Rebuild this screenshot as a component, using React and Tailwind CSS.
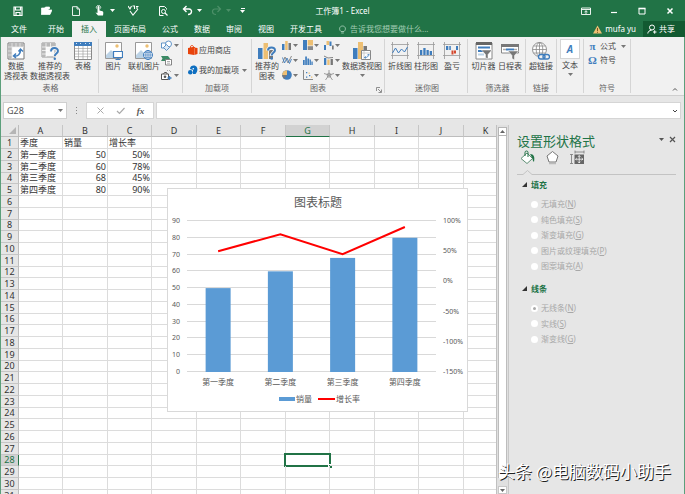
import { useState } from 'react';
import clsx from 'clsx';

const COLUMNS = ['A', 'B', 'C', 'D', 'E', 'F', 'G', 'H', 'I', 'J', 'K'];
const ROWS = Array.from({ length: 31 }, (_, i) => i + 1);
const SELECTED = { col: 'G', row: 28 };

const SALES = [
  { name: '第一季度', amount: 50, rate: 50 },
  { name: '第二季度', amount: 60, rate: 78 },
  { name: '第三季度', amount: 68, rate: 45 },
  { name: '第四季度', amount: 80, rate: 90 },
];

const CELLS = { A1: '季度', B1: '销量', C1: '增长率' };
SALES.forEach((s, i) => {
  CELLS[`A${i + 2}`] = s.name;
  CELLS[`B${i + 2}`] = s.amount;
  CELLS[`C${i + 2}`] = `${s.rate}%`;
});

const BLUE = '#3f7dbd';
const TAN = '#edbf73';
const GRAY = '#777777';

/* ---------- small shared pieces ---------- */

function Caret({ className }) {
  return (
    <svg viewBox="0 0 5 3" className={clsx('w-[5px] h-[3px] shrink-0', className)} fill="currentColor">
      <path d="M0 0h5L2.5 3z" />
    </svg>
  );
}

function Icon({ size = 18, className, children }) {
  return (
    <svg viewBox={`0 0 ${size} ${size}`} width={size} height={size} fill="none" className={clsx('shrink-0', className)}>
      {children}
    </svg>
  );
}

function BigButton({ icon, lines, caret, className }) {
  return (
    <button className={clsx('flex flex-col items-center shrink-0 pt-[3px]', className)}>
      {icon}
      <span className="mt-px flex flex-col items-center whitespace-nowrap leading-[10px]">
        {lines.map((l) => <span key={l}>{l}</span>)}
      </span>
      {caret && <Caret className="mt-[3px] text-[#777]" />}
    </button>
  );
}

function Group({ label, className, launcher, children }) {
  return (
    <section className={clsx('relative flex flex-col shrink-0 border-r border-[#d5d5d5] my-[2px]', className)}>
      <div className="flex flex-1">{children}</div>
      <div className="h-[10px] leading-[10px] text-center text-[#666]">{label}</div>
      {launcher && (
        <button aria-label="图表选项" className="absolute right-[2px] bottom-0">
          <Icon size={6} className="text-[#777]"><path d="M.5 4V.5H4M2 2l3 3M5.500 2.500v3h-3" stroke="currentColor" strokeWidth=".8" /></Icon>
        </button>
      )}
    </section>
  );
}

/* ---------- ribbon icons ---------- */

const PivotIcon = () => (
  <Icon>
    <path d="M1 1h16v16H1z" fill="#fff" stroke={GRAY} />
    <path d="M1.500 1.500h15v3.500h-15zM1.500 1.500H5v15H1.500z" fill="#b8b8b8" />
    <path d="M1 5h16M5 1v16M1 9h4M1 13h4M9 1v4M13 1v4" stroke="#eee" strokeWidth=".7" />
    <path d="M7 14c4 .5 6.500-2 6.500-6M11.500 9.500l2-2.500 2.500 2.500M9 11.500L6.500 14 9 16" stroke={BLUE} strokeWidth="1.500" />
  </Icon>
);

const PivotHelpIcon = () => (
  <Icon>
    <path d="M1 1h13v14H1z" fill="#f8f8f8" stroke="#999" />
    <path d="M1 1h13v4H1zM1 1h4v14H1z" fill="#b8b8b8" />
    <path d="M1 5h13M5 1v14M1 8.500h9M1 12h8M9.500 1v12" stroke="#fff" strokeWidth=".7" />
    <path d="M10 9c0-4 7-4 7 0 0 2.500-3 2.500-3 5.500" stroke="#f1f1f1" strokeWidth="4" />
    <path d="M10 9.500c0-4.500 7-4.500 7-.5 0 2.500-3.200 2.300-3.200 5" stroke={BLUE} strokeWidth="1.900" />
    <circle cx="13.800" cy="16.700" r="1.200" fill={BLUE} />
  </Icon>
);

const TableIcon = () => (
  <Icon>
    <path d="M.5 1h17v16.500H.5z" fill="#fff" stroke="#8a8a8a" />
    <path d="M0 0h18v4H0z" fill={BLUE} />
    <path d="M1 6.500h16M1 9.200h16M1 12h16M1 14.700h16M4.500 4v13M9 4v13M13.500 4v13" stroke="#999" strokeWidth=".6" />
    <path d="M2 1.500h1M6 1.500h1M11 1.500h1M15 1.500h1" stroke="#fff" strokeWidth=".8" />
  </Icon>
);

const Landscape = () => (
  <>
    <path d="M.5.500h16v16H.5z" fill="#fff" stroke="#999" />
    <circle cx="12" cy="4" r="1.700" fill={TAN} />
    <path d="M1 13l5-5 4 4 3-2 3 2v4H1z" fill="#bcd3e6" />
  </>
);

const PictureIcon = () => (
  <Icon>
    <Landscape />
    <path d="M8.500 9.500h9v6h-9z" fill="#fff" stroke={BLUE} strokeWidth="1.200" />
    <path d="M13 15.500v2M10.500 17.500h5" stroke={BLUE} />
  </Icon>
);

const OnlinePictureIcon = () => (
  <Icon>
    <Landscape />
    <circle cx="13" cy="13" r="4.500" fill="#fff" stroke={BLUE} />
    <path d="M8.500 13h9M13 8.500v9M9.500 10.700h7M9.500 15.300h7" stroke={BLUE} strokeWidth=".7" />
    <ellipse cx="13" cy="13" rx="2.200" ry="4.500" stroke={BLUE} strokeWidth=".7" />
  </Icon>
);

const ShapesIcon = () => (
  <Icon size={11}>
    <path d="M.5 3h5v5h-5z" fill="#fff" stroke={BLUE} strokeWidth=".8" />
    <circle cx="7.500" cy="4" r="3" fill="#fff" stroke={BLUE} strokeWidth=".8" />
    <path d="M5.500 4.500L8.500 7.500l-3 3-3-3z" fill="#dbe8f4" stroke={BLUE} strokeWidth=".8" />
  </Icon>
);

const SmartArtIcon = () => (
  <Icon size={11}>
    <path d="M0 1h7l2 2.500L7 6H0l1.500-2.500z" fill="#3c8a65" />
    <path d="M4.500 4.500h6v5.500h-6z" fill="#fff" stroke={GRAY} strokeWidth=".9" />
    <path d="M6 6.500h3M6 8.200h3" stroke={GRAY} strokeWidth=".6" />
  </Icon>
);

const ScreenshotIcon = () => (
  <Icon size={11}>
    <path d="M.5 4h7v5.500h-7zM2.500 4l1-1.500h2l.7 1.500" stroke="#555" fill="#fff" />
    <circle cx="4" cy="6.800" r="1.300" fill="#555" />
    <path d="M6.500 8h4M8.500 6v4" stroke={BLUE} strokeWidth="1.300" />
    <path d="M6 .5h3.500V3" stroke="#aaa" strokeDasharray="1 1" />
  </Icon>
);

const StoreIcon = () => (
  <Icon size={10}>
    <path d="M0 3l6-1.200V10L0 9zM6.300 2.500L9.500 3v6l-3.200 1z" fill="#e8430b" />
    <path d="M2.500 3V1.300C3 .3 5 .3 5.500 1.500L7 3" stroke="#e8430b" strokeWidth=".9" />
  </Icon>
);

const AddinIcon = () => (
  <Icon size={10}>
    <path d="M2 4C2 0 7.500-.5 9 2.500c1 2.500 0 5-1.500 6.500H5V5z" fill="#0f6fc0" />
    <circle cx="2.300" cy="7.300" r="2.300" fill="#0f6fc0" />
    <circle cx="5.300" cy="3.800" r=".8" fill="#fff" />
  </Icon>
);

const RecommendIcon = () => (
  <Icon>
    <path d="M0 6h4.500v11H0z" fill={BLUE} />
    <path d="M5.500 1H10v16H5.500z" fill={TAN} />
    <path d="M11 8h4v9h-4z" fill="#777" />
    <path d="M10 8.500c0-4 7-4 7 0 0 2.500-3.300 2.500-3.300 5.500" stroke="#f1f1f1" strokeWidth="4" />
    <path d="M10 8.500c0-4 7-4 7-.3 0 2.700-3.300 2.500-3.300 5.300" stroke={BLUE} strokeWidth="2" />
    <circle cx="13.700" cy="16.500" r="1.300" fill={BLUE} />
  </Icon>
);

const PivotChartIcon = () => (
  <Icon>
    <path d="M0 6h4.500v11H0z" fill={BLUE} />
    <path d="M5 0h5v17H5z" fill={TAN} />
    <path d="M10.500 4H14v5h-3.500z" fill="#777" />
    <path d="M8.500 8.500h9v9h-9z" fill="#fff" stroke="#888" />
    <path d="M9 11h8M11 9v8" stroke="#ccc" />
    <path d="M11.500 15.500c2.500.3 4-.7 4-3M14.300 13.300l1.200-1.300 1.200 1.300M12.800 14.300l-1.300 1.200 1.300 1" stroke={BLUE} strokeWidth=".8" />
  </Icon>
);

const CHART_ICONS = [
  { name: '柱形图', art: <><path d="M0 4h2.500v6H0z" fill={BLUE} /><path d="M3.200 1h2.500v9H3.200z" fill={TAN} /><path d="M6.500 3H9v7H6.500z" fill="#777" /></> },
  { name: '层次结构图', art: <><path d="M0 0h4v10H0z" fill={BLUE} /><path d="M4.700 0H10v5.500H4.700z" fill={TAN} /><path d="M4.700 6.200H10V10H4.700z" fill="#888" /></> },
  { name: '瀑布图', art: <><path d="M0 5h2v5H0z" fill={BLUE} /><path d="M2.500 1h2.800v4H2.500z" fill={TAN} /><path d="M5.500 1.500h2V6h-2z" fill={BLUE} /><path d="M8 5.500h1.700v4H8z" fill="#777" /></> },
  { name: '折线图', art: <><path d="M.5 8L3 2l3 6 3.500-7" stroke="#888" /><path d="M.5 2.500L2.500 8 5 3l2.500 5.500L9.500 4" stroke={BLUE} strokeWidth=".9" /></> },
  { name: '统计图', art: <path d="M0 5h1.700v5H0zM2.200 1.500h1.700V10H2.200zM4.400 3.500h1.700V10H4.400zM6.600 4.500h1.300V10H6.600zM8.400 6.500h1.300V10H8.400z" fill={BLUE} /> },
  { name: '组合图', art: <><path d="M0 3h2.300v7H0z" fill={BLUE} /><path d="M3.300 4.500h2.300V10H3.300z" fill={TAN} /><path d="M6.600 4h2.300v6H6.600z" fill="#777" /><path d="M0 1l4 2 5-.500" stroke="#666" strokeWidth=".8" /></> },
  { name: '饼图', art: <><circle cx="5" cy="5" r="4.800" fill={BLUE} /><path d="M5 5V.2A4.800 4.800 0 0 0 .2 5z" fill={TAN} /><path d="M5 5H.2A4.800 4.800 0 0 0 2 8.700z" fill="#777" /></> },
  { name: '散点图', art: <><path d="M.5 0v9.500H10" stroke="#888" /><path d="M3 2h1.300v1.300H3zM6 5h1.300v1.300H6zM3 6.500h1.300v1.300H3z" fill={BLUE} /><path d="M5.500 2.500h1.300v1.300H5.500zM8 6.500h1.300v1.300H8z" fill={TAN} /></> },
  { name: '雷达图', art: <path d="M5 0v5M0 3.500l5 1.500 5-1.500M1.500 10L5 5l3.500 5M3 4.300L5 3l2 1.300L6.300 7H3.700z" stroke="#888" strokeWidth=".8" /> },
];

const SparkFrame = ({ children }) => (
  <Icon>
    <path d="M0 2.500h18M0 13.500h18M1.500 0v17M16.500 0v17" stroke="#999" strokeWidth=".8" />
    {children}
  </Icon>
);

const SlicerIcon = () => (
  <Icon>
    <path d="M1 1h16v16H1z" fill="#fff" stroke="#888" />
    <path d="M1 0h16v3H1z" fill="#666" />
    <path d="M3 4.500h12v2H3zM3 8h6v2H3z" fill={BLUE} />
    <path d="M3 11.500h6v2H3z" fill="#bcd3e6" />
    <path d="M6.500 8h10.500l-4 4.500V17l-2.500-1.500v-3z" fill="#777" stroke="#fff" strokeWidth=".5" />
  </Icon>
);

const TimelineIcon = () => (
  <Icon>
    <path d="M.5 2.500h17V11H.5z" fill="#fff" stroke="#888" />
    <path d="M0 2h18v3H0z" fill="#777" />
    <path d="M2 7.500h3M13 7.500h3" stroke="#aaa" strokeWidth="1.500" />
    <path d="M5 7.500h8" stroke={BLUE} strokeWidth="2" />
    <path d="M7 9h10.500l-4 4.500V18L11 16.500v-3z" fill="#777" stroke="#fff" strokeWidth=".5" />
  </Icon>
);

const LinkIcon = () => (
  <Icon>
    <circle cx="7.500" cy="7.500" r="7" fill="#fff" stroke="#888" strokeWidth=".9" />
    <ellipse cx="7.500" cy="7.500" rx="3.300" ry="7" stroke="#888" strokeWidth=".8" />
    <path d="M.5 7.500h14M1.500 4h12M1.500 11h12M7.500.500v14" stroke="#888" strokeWidth=".8" />
    <rect x="6.500" y="12.500" width="6.500" height="4.500" rx="2.200" fill="#f1f1f1" stroke={BLUE} strokeWidth="1.400" />
    <rect x="11" y="12.500" width="6.500" height="4.500" rx="2.200" stroke={BLUE} strokeWidth="1.400" />
  </Icon>
);

/* ---------- title bar and tabs ---------- */

const quick = 'flex items-center justify-center w-[29px]';

function TitleBar() {
  return (
    <header className="relative flex h-[21px] items-center justify-between text-white">
      <div className="flex items-center pl-[3px]">
        <button aria-label="保存" className={quick}>
          <Icon size={10}><path d="M1 1h8v8.500H1zM2.500 1v3h5V1M3 9.500V6.500h4v3" stroke="currentColor" strokeWidth="1.200" /></Icon>
        </button>
        <button aria-label="打开" className={quick}>
          <Icon size={11}><path d="M.5 9.500V3h3l1-1h4v2M.5 9.500L2.500 5H11L9 9.500z" fill="currentColor" stroke="currentColor" strokeWidth=".7" /></Icon>
        </button>
        <button aria-label="新建" className={quick}>
          <Icon size={10}><path d="M1.500.700h4.500L8.500 3v6.500h-7zM6 .7V3h2.500" stroke="currentColor" strokeWidth=".9" /></Icon>
        </button>
        <button aria-label="触摸模式" className="flex items-center justify-center gap-[5px] w-[29px]">
          <Icon size={11}><path d="M3.500 5.500V2a1 1 0 0 1 2 0v3.500l3 .7c1 .3 1 1.500.5 4.300H4L1.500 7.500l2 .5z" fill="currentColor" /><path d="M2.500 3.500a2.200 2.200 0 1 1 4 0" stroke="currentColor" strokeWidth=".8" /></Icon>
          <Caret />
        </button>
        <button aria-label="拼写检查" className={quick}>
          <Icon size={11}><path d="M0 1l2 3 1.500-3M4.500 1h2v3M8 1.500h2.500M9 1v3M2 6l3 4 5-6" stroke="currentColor" strokeWidth="1.100" /></Icon>
        </button>
        <button aria-label="打印预览" className={quick}>
          <Icon size={10}><path d="M8.500 3.500V2.500L6.500.500h-5v9h4" stroke="currentColor" /><circle cx="5.500" cy="5.500" r="2" stroke="currentColor" /><path d="M7 7l2.500 2.500" stroke="currentColor" strokeWidth="1.300" /></Icon>
        </button>
        <button aria-label="撤消" className="flex items-center justify-center gap-[4px] w-[29px]">
          <Icon size={11}><path d="M4.500 1L1.500 4l3 3M1.500 4H7c3.500 0 3.500 5.500-1 5.500" stroke="currentColor" strokeWidth="1.400" /></Icon>
          <Caret />
        </button>
        <button aria-label="恢复" className="flex items-center justify-center gap-[4px] w-[29px] text-[#4d9069]">
          <Icon size={11}><path d="M6.500 1l3 3-3 3M9.500 4H4C.5 4 .5 9.500 5 9.500" stroke="currentColor" strokeWidth="1.200" /></Icon>
          <Caret />
        </button>
        <button aria-label="自定义快速访问工具栏" className="flex flex-col items-center gap-[1px] pl-[5px]">
          <span className="w-[4px] h-px bg-white" />
          <Caret className="w-[4px]" />
        </button>
      </div>
      <h1 className="absolute inset-x-0 text-center pointer-events-none">工作簿1 - Excel</h1>
      <div className="flex items-center gap-[18px] pr-[10px]">
        <button aria-label="功能区显示选项"><Icon size={10}><path d="M.5 2h9v6.500h-9zM.5 3.500h9M5 8V5M3.500 6L5 4.700 6.500 6" stroke="currentColor" strokeWidth=".9" /></Icon></button>
        <button aria-label="最小化"><Icon size={10}><path d="M2 6.500h6" stroke="currentColor" strokeWidth="1.200" /></Icon></button>
        <button aria-label="最大化"><Icon size={10}><path d="M2 2.500h6V8H2z" stroke="currentColor" /><path d="M1.500 2.500h7" stroke="currentColor" strokeWidth="1.600" /></Icon></button>
        <button aria-label="关闭"><Icon size={10}><path d="M2.500 2.500l5 5M7.500 2.500l-5 5" stroke="currentColor" strokeWidth="1.500" /></Icon></button>
      </div>
    </header>
  );
}

const TABS = ['文件', '开始', '插入', '页面布局', '公式', '数据', '审阅', '视图', '开发工具'];

function TabBar({ active, onSelect }) {
  return (
    <nav className="flex h-4 items-stretch justify-between text-white">
      <div className="flex">
        {TABS.map((t) => (
          <button
            key={t}
            onClick={() => onSelect(t)}
            className={clsx(
              'whitespace-nowrap first:pl-[11px] first:mr-[5px]',
              t === active ? 'px-[9px] bg-[#f1f1f1] text-[#217346]' : 'px-[8px]'
            )}
          >
            {t}
          </button>
        ))}
        <button className="flex items-center gap-[3px] pl-[8px] text-[#a3cdb4] whitespace-nowrap">
          <Icon size={9}><path d="M3 6.500C.5 4.500 1.500 1 4.500 1s4 3.500 1.500 5.500zM3.200 8h2.600" stroke="currentColor" strokeWidth=".9" /></Icon>
          告诉我您想要做什么...
        </button>
      </div>
      <div className="flex items-stretch">
        <span className="flex items-center gap-[3px] pr-[7px]">
          <Icon size={9}><path d="M4.500.500L9 8.500H0z" fill={TAN} /><path d="M4.500 3v3M4.500 6.800v1" stroke="#7a5a20" /></Icon>
          mufa yu
        </span>
        <button className="flex items-center gap-[2px] w-[42px] pl-[4px] bg-[#125a31]">
          <Icon size={10}><circle cx="5" cy="3.500" r="2.500" stroke="currentColor" /><path d="M.8 9.500C1 7.500 2.500 6.300 4.500 6.300M6 8h3.500M7.700 6.300v3.400" stroke="currentColor" /></Icon>
          共享
        </button>
      </div>
    </nav>
  );
}

function Ribbon() {
  return (
    <div className="flex h-[59px] bg-[#f1f1f1] border-b border-[#cfcfcf] text-[#444]">
      <Group label="表格" className="w-[98px] pl-[2px] -mr-px">
        <BigButton className="w-[26px]" icon={<PivotIcon />} lines={['数据', '透视表']} />
        <BigButton className="w-[42px]" icon={<PivotHelpIcon />} lines={['推荐的', '数据透视表']} />
        <BigButton className="w-[24px]" icon={<TableIcon />} lines={['表格']} />
      </Group>
      <Group label="插图" className="w-[85px]">
        <BigButton className="w-[29px] pl-[2px]" icon={<PictureIcon />} lines={['图片']} />
        <BigButton className="w-[34px]" icon={<OnlinePictureIcon />} lines={['联机图片']} />
        <div className="flex flex-col gap-[4px] pt-px text-[#777]">
          <button aria-label="形状" className="flex items-center gap-[2px]"><ShapesIcon /><Caret /></button>
          <button aria-label="SmartArt" className="flex items-center"><SmartArtIcon /></button>
          <button aria-label="屏幕截图" className="flex items-center gap-[2px]"><ScreenshotIcon /><Caret /></button>
        </div>
      </Group>
      <Group label="加载项" className="w-[69px]">
        <div className="flex flex-1 flex-col gap-[10px] pl-[5px] pt-[6px] whitespace-nowrap">
          <button className="flex items-center gap-[1px] leading-[10px]"><StoreIcon />应用商店</button>
          <button className="flex items-center gap-[1px] leading-[10px]"><AddinIcon />我的加载项<Caret className="ml-auto mr-[4px] text-[#777]" /></button>
        </div>
      </Group>
      <Group label="图表" className="w-[133px]" launcher>
        <BigButton className="w-[30px]" icon={<RecommendIcon />} lines={['推荐的', '图表']} />
        <div className="grid grid-cols-3 gap-x-[5px] gap-y-[5px] content-start pt-px text-[#777]">
          {CHART_ICONS.map((c) => (
            <button key={c.name} aria-label={c.name} className="flex items-center gap-px">
              <Icon size={10}>{c.art}</Icon>
              <Caret className="w-[4px]" />
            </button>
          ))}
        </div>
        <BigButton className="flex-1" icon={<PivotChartIcon />} lines={['数据透视图']} caret />
      </Group>
      <Group label="迷你图" className="w-[83px] pl-[2px]">
        <BigButton className="w-[26px]" icon={<SparkFrame><path d="M1.500 11L4.500 6l3 5 3-4 3 3 3-5" stroke={BLUE} /></SparkFrame>} lines={['折线图']} />
        <BigButton className="w-[26px]" icon={<SparkFrame><path d="M3 8h2.300v5H3zM6.300 6h2.300v7H6.300zM9.500 8h2.300v5H9.500zM12.700 9H15v4h-2.300z" fill={BLUE} /></SparkFrame>} lines={['柱形图']} />
        <BigButton className="w-[26px]" icon={<SparkFrame><path d="M3 4h2.300v4H3zM6.300 4h1.500v4H6.300zM13 4h2v4h-2z" fill={BLUE} /><path d="M8.500 8.500h2v4h-2zM11 8.500h2v3h-2z" fill="#d5492f" /></SparkFrame>} lines={['盈亏']} />
      </Group>
      <Group label="筛选器" className="w-[58px] pl-[2px]">
        <BigButton className="w-[27px]" icon={<SlicerIcon />} lines={['切片器']} />
        <BigButton className="w-[26px]" icon={<TimelineIcon />} lines={['日程表']} />
      </Group>
      <Group label="链接" className="w-[31px]">
        <BigButton className="w-[30px]" icon={<LinkIcon />} lines={['超链接']} />
      </Group>
      <Group label="" className="w-[27px]">
        <BigButton
          className="w-[26px]"
          icon={
            <span className="-mt-[3px] flex size-[20px] items-center justify-center bg-white border border-[#d5d5d5]">
              <span className="text-[10px] leading-none italic font-bold text-[#3f7dbd]">A</span>
            </span>
          }
          lines={['文本']}
          caret
        />
      </Group>
      <Group label="符号" className="w-[47px]">
        <div className="flex flex-1 flex-col gap-[4px] pl-[4px] pt-[2px] whitespace-nowrap">
          <button className="flex items-center gap-[3px] leading-[10px]"><b className="w-[9px] text-[11px] font-['Liberation_Serif',serif] text-[#3f7dbd]">π</b>公式<Caret className="ml-auto mr-[4px] text-[#777]" /></button>
          <button className="flex items-center gap-[3px] leading-[10px]"><b className="w-[9px] text-[11px] font-['Liberation_Serif',serif] text-[#3f7dbd]">Ω</b>符号</button>
        </div>
      </Group>
      <button aria-label="折叠功能区" className="ml-auto mr-[6px] mb-[3px] self-end">
        <Icon size={6}><path d="M1 4.500l2-2 2 2" stroke="#555" /></Icon>
      </button>
    </div>
  );
}

function FormulaBar() {
  return (
    <div className="flex h-[29px] pt-[6px] pb-[6px] pl-[2px] pr-[3px] bg-[#e6e6e6] text-[#555]">
      <div className="flex items-center w-[64px] bg-white border border-[#cfcfcf]">
        <input aria-label="名称框" defaultValue="G28" className="min-w-0 flex-1 pl-[3px] text-[9px] outline-none" />
        <Caret className="mr-[3px] text-[#777]" />
      </div>
      <div className="flex w-[19px] flex-col items-center justify-center gap-[2px]">
        <span className="size-px bg-[#888]" /><span className="size-px bg-[#888]" /><span className="size-px bg-[#888]" />
      </div>
      <div className="flex w-[68px] items-center justify-around px-[3px] bg-white border border-[#d5d5d5]">
        <button aria-label="取消"><Icon size={9}><path d="M1.500 1.500l6 6M7.500 1.500l-6 6" stroke="#aaa" /></Icon></button>
        <button aria-label="输入"><Icon size={9}><path d="M1 5l2.500 2.500L8.500 2" stroke="#aaa" strokeWidth="1.200" /></Icon></button>
        <button aria-label="插入函数" className="font-['Liberation_Serif',serif] italic font-bold text-[9px]">fx</button>
      </div>
      <div className="ml-[2px] flex flex-1 items-center bg-white border border-[#d5d5d5]">
        <input aria-label="编辑栏" className="min-w-0 flex-1 outline-none" />
        <Icon size={6} className="mr-[2px]"><path d="M1 2l2 2 2-2" stroke="#444" /></Icon>
      </div>
    </div>
  );
}

/* ---------- worksheet ---------- */

// chart coordinates, inside a 299x222 drawing
const PLOT = { left: 19, right: 268, top: 32, bottom: 183 };
const yAmount = (v) => PLOT.bottom - (v / 90) * (PLOT.bottom - PLOT.top);
const yRate = (v) => PLOT.bottom - ((v + 150) / 250) * (PLOT.bottom - PLOT.top);
const band = (PLOT.right - PLOT.left) / SALES.length;
const xMid = (i) => PLOT.left + band * (i + 0.5);

function Chart() {
  return (
    <figure className="absolute left-[166px] top-[63px] bg-white border border-[#d9d9d9]">
      <svg width="299" height="222" className="block" fill="#595959" fontSize="7">
        <text x="150" y="18" textAnchor="middle" fontSize="12">图表标题</text>
        {[0, 10, 20, 30, 40, 50, 60, 70, 80, 90].map((v) => (
          <g key={v}>
            <path d={`M${PLOT.left} ${Math.round(yAmount(v)) - 0.5}H${PLOT.right}`} stroke="#d9d9d9" />
            <text x="12" y={yAmount(v) + 2} textAnchor="end">{v}</text>
          </g>
        ))}
        {[-150, -100, -50, 0, 50, 100].map((v) => (
          <text key={v} x="275" y={yRate(v) + 2}>{v}%</text>
        ))}
        {SALES.map((s, i) => (
          <g key={s.name}>
            <rect x={xMid(i) - 12.5} y={yAmount(s.amount)} width="25" height={PLOT.bottom - yAmount(s.amount)} fill="#5b9bd5" />
            <text x={xMid(i)} y="196" textAnchor="middle" fontSize="8">{s.name}</text>
          </g>
        ))}
        <polyline points={SALES.map((s, i) => `${xMid(i)},${yRate(s.rate)}`).join(' ')} fill="none" stroke="#ff0000" strokeWidth="2" />
        <rect x="111" y="208" width="16" height="4" fill="#5b9bd5" />
        <text x="128" y="213" fontSize="8">销量</text>
        <path d="M150 210h17" stroke="#ff0000" strokeWidth="2" />
        <text x="168" y="213" fontSize="8">增长率</text>
      </svg>
    </figure>
  );
}

function Sheet() {
  return (
    <main className="relative min-w-0 flex-1 overflow-hidden bg-white">
      <table className="w-[507px] table-fixed border-separate border-spacing-0 text-[9px] leading-[10px] text-[#333]">
        <colgroup>
          <col className="w-[18px]" />
          {COLUMNS.map((c, i) => <col key={c} className={i % 2 ? 'w-[45px]' : 'w-[44px]'} />)}
        </colgroup>
        <thead>
          <tr className="h-3 bg-[#e6e6e6]">
            <th className="p-0 border-r border-b border-[#bdbdbd]">
              <svg viewBox="0 0 8 8" className="ml-auto mr-[2px] size-[7px]" fill="#b5b5b5"><path d="M8 0v8H0z" /></svg>
            </th>
            {COLUMNS.map((c) => (
              <th
                key={c}
                className={clsx(
                  'p-0 font-normal border-r border-b border-r-[#c6c6c6]',
                  c === SELECTED.col ? 'bg-[#d2d2d2] text-[#217346] border-b-[#217346]' : 'border-b-[#bdbdbd]'
                )}
              >
                {c}
              </th>
            ))}
          </tr>
        </thead>
        <tbody>
          {ROWS.map((r) => (
            <tr key={r} className="h-3 [&:nth-child(4n)]:h-[11px]">
              <th
                className={clsx(
                  'p-0 font-normal border-r border-b border-b-[#c6c6c6]',
                  r === SELECTED.row ? 'bg-[#d2d2d2] text-[#217346] border-r-[#217346]' : 'bg-[#e6e6e6] border-r-[#bdbdbd]'
                )}
              >
                {r}
              </th>
              {COLUMNS.map((c) => (
                <td
                  key={c}
                  className={clsx('relative p-0 px-px whitespace-nowrap border-r border-b border-[#dcdcdc]', r > 1 && c !== 'A' && 'text-right')}
                >
                  {CELLS[c + r]}
                  {c === SELECTED.col && r === SELECTED.row && (
                    <span className="absolute -inset-[2px] border-2 border-[#217346]">
                      <span className="absolute -right-[3px] -bottom-[3px] size-[4px] bg-[#217346] border-l border-t border-white" />
                    </span>
                  )}
                </td>
              ))}
            </tr>
          ))}
        </tbody>
      </table>
      <Chart />
    </main>
  );
}

function ScrollBar() {
  return (
    <div className="flex w-[12px] flex-col items-center justify-between bg-[#e0e0e0] border-l border-[#c0c0c0] pt-[2px]">
      <button aria-label="向上滚动" className="flex h-[9px] w-[9px] items-center justify-center bg-white border border-[#b5b5b5] text-[#666]">
        <Caret className="rotate-180" />
      </button>
      <div className="w-[9px] flex-1 bg-white border-x border-[#bdbdbd]" />
      <div className="h-[8px]" />
      <button aria-label="向下滚动" className="flex h-[8px] w-[9px] items-center justify-center bg-white border border-[#c8c8c8] text-[#666]">
        <Caret />
      </button>
    </div>
  );
}

/* ---------- format pane ---------- */

function OptionGroup({ title, name, options, value }) {
  return (
    <fieldset disabled className="pt-[4px] pb-[5px]">
      <legend className="contents">
        <span className="flex items-center gap-[4px] pl-[5px] h-[11px] text-[#217346] font-bold">
          <Icon size={5}><path d="M5 0v5H0z" fill="#333" /></Icon>
          {title}
        </span>
      </legend>
      <div className="mt-[6px] pl-[14px]">
        {options.map(([label, key]) => (
          <label key={label} className="flex items-center gap-[3px] h-4 even:h-[15px] text-[#a8a8a8]">
            <input
              type="radio"
              name={name}
              defaultChecked={label === value}
              className="appearance-none size-[7px] rounded-full bg-white border-2 border-white checked:bg-[#aaa]"
            />
            <span>{label}(<u>{key}</u>)</span>
          </label>
        ))}
      </div>
    </fieldset>
  );
}

function FormatPane() {
  return (
    <aside className="w-[176px] shrink-0 bg-[#e6e6e6] border-l border-[#c8c8c8] pl-[8px] pr-[8px] pt-[7px]">
      <div className="flex items-start justify-between">
        <h2 className="text-[13px] leading-[18px] text-[#217346]">设置形状格式</h2>
        <div className="flex items-center gap-[5px] pt-[4px] text-[#555]">
          <button aria-label="任务窗格选项"><Caret /></button>
          <button aria-label="关闭窗格"><Icon size={7}><path d="M1 1l5 5M6 1L1 6" stroke="currentColor" strokeWidth="1.200" /></Icon></button>
        </div>
      </div>
      <div className="flex gap-[10px] pl-[3px]">
        <button aria-label="填充与线条">
          <Icon size={15}><path d="M7 3l5.500 5.500L7 13.500 1 8.500z" fill="#fff" stroke="#5f8f75" /><path d="M5 6V2.500a1.500 1.500 0 0 1 3 0V7" stroke="#217346" /><path d="M10 4c4 0 5 3 4 8-1-1-1.500-2-1.500-3.500z" fill="#217346" /></Icon>
        </button>
        <button aria-label="效果">
          <Icon size={15}><path d="M7.500 1.500L13 6l-2 6H4L2 6z" fill="#fff" stroke="#777" /><path d="M4 13.500h7" stroke="#bbb" strokeWidth="1.500" /></Icon>
        </button>
        <button aria-label="大小与属性">
          <Icon size={15}><path d="M4.500 4.500H14V14H4.500z" fill="#666" /><path d="M9.200 5.500v7.500M5.500 9.200H13M8 6.800l1.200-1.200 1.200 1.200M8 11.700l1.200 1.200 1.200-1.200M6.800 8L5.600 9.200l1.200 1.200M11.700 8l1.200 1.200-1.200 1.200" stroke="#fff" strokeWidth=".8" /><path d="M1.500 4.500v9M0 4.500h3M0 13.500h3M5 2h9M5 .5v3M14 .5v3" stroke="#777" strokeWidth=".8" /></Icon>
        </button>
      </div>
      <div className="flex items-end pt-[5px]">
        <span className="h-px w-[6px] bg-[#c3c3c3]" />
        <svg viewBox="0 0 9 5" className="w-[9px] h-[5px]" fill="none"><path d="M0 4.500L4.500.500 9 4.500" stroke="#c3c3c3" /></svg>
        <span className="h-px flex-1 bg-[#c3c3c3]" />
      </div>
      <OptionGroup
        title="填充"
        name="fill"
        options={[['无填充', 'N'], ['纯色填充', 'S'], ['渐变填充', 'G'], ['图片或纹理填充', 'P'], ['图案填充', 'A']]}
      />
      <OptionGroup title="线条" name="line" value="无线条" options={[['无线条', 'N'], ['实线', 'S'], ['渐变线', 'G']]} />
    </aside>
  );
}

export default function App() {
  const [tab, setTab] = useState('插入');

  return (
    <div className="relative flex h-screen flex-col overflow-hidden bg-[#217346] font-['Noto_Sans','Noto_Sans_CJK_SC',sans-serif] text-[8px] leading-[12px]">
      <TitleBar />
      <TabBar active={tab} onSelect={setTab} />
      <div className="flex min-h-0 flex-1 flex-col border-x border-[#5c9f7b]">
        <Ribbon />
        <FormulaBar />
        <div className="flex min-h-0 flex-1">
          <Sheet />
          <ScrollBar />
          <FormatPane />
        </div>
      </div>
      <p className="absolute right-[14px] bottom-[12px] whitespace-nowrap font-['Noto_Sans_CJK_SC',sans-serif] text-[17px] leading-[22px] text-white [text-shadow:1px_1px_0_#222]">
        头条 @电脑数码小助手
      </p>
    </div>
  );
}
